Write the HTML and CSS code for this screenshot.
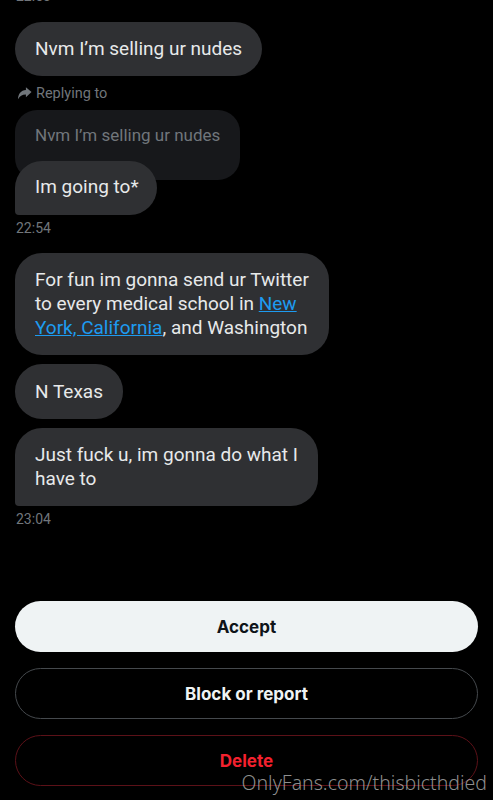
FILE: index.html
```html
<!DOCTYPE html>
<html>
<head>
<meta charset="utf-8">
<link rel="stylesheet" href="styles.css">
</head>
<body>
<div class="page">
  <div class="messages">
    <div class="time time-top">22:53</div>
    <div class="bubble b1">Nvm I’m selling ur nudes</div>
    <div class="replying">
      <svg class="reply-icon" viewBox="0 0 16 16" width="15" height="15"><path d="M15.5 6.5 L9.5 1.2 V4.2 C4.2 4.6 1.2 8.4 1 14.2 C2.8 10.6 5.4 9.2 9.5 9 V12 Z" fill="#71767b"/></svg>
      <span>Replying to</span>
    </div>
    <div class="quote">Nvm I’m selling ur nudes</div>
    <div class="bubble b2 last">Im going to*</div>
    <div class="time t2">22:54</div>
    <div class="bubble b3">For fun im gonna send ur Twitter<br>to every medical school in <a class="link">New<br>York, California</a>, and Washington</div>
    <div class="bubble b4">N Texas</div>
    <div class="bubble b5 last">Just fuck u, im gonna do what I<br>have to</div>
    <div class="time t3">23:04</div>
  </div>
  <div class="actions">
    <div class="btn accept">Accept</div>
    <div class="btn block">Block or report</div>
    <div class="btn delete">Delete</div>
  </div>
  <div class="watermark">OnlyFans.com/thisbicthdied</div>
</div>
</body>
</html>
```
FILE: styles.css
```css
html, body {
  margin: 0;
  padding: 0;
  background: #000;
}
body {
  font-family: Roboto, "Noto Sans", sans-serif;
  color: #e7e9ea;
}
.page {
  position: relative;
  height: 800px;
  overflow: hidden;
  display: flex;
  flex-direction: column;
}
.messages {
  display: flex;
  flex-direction: column;
  align-items: flex-start;
  padding: 0 15px;
}
.time {
  font-size: 14px;
  line-height: 18px;
  color: #71767b;
  padding-left: 1px;
}
.time-top {
  margin-top: -13px;
}
.bubble {
  background: #2f3033;
  border-radius: 27px;
  padding: 15px 20px;
  font-size: 19px;
  line-height: 24px;
  color: #e7e9ea;
}
.bubble.last {
  border-bottom-left-radius: 4px;
}
.b1 {
  margin-top: 17px;
}
.replying {
  display: flex;
  align-items: center;
  gap: 4px;
  margin-top: 8px;
  height: 18px;
  font-size: 14.5px;
  color: #71767b;
  padding-left: 2px;
}
.reply-icon {
  display: block;
}
.quote {
  margin-top: 8px;
  background: #17181b;
  border-radius: 22px;
  padding: 13px 20px 33px 20px;
  font-size: 17px;
  line-height: 24px;
  color: #71767b;
}
.b2 {
  margin-top: -19px;
  padding-top: 14px;
  padding-bottom: 16px;
  padding-right: 18px;
}
.t2 {
  margin-top: 4px;
}
.b3 {
  margin-top: 16px;
}
.link {
  color: #1d9bf0;
  text-decoration: underline;
}
.b4 {
  margin-top: 9px;
  padding-top: 15.5px;
  padding-bottom: 15.5px;
}
.b5 {
  margin-top: 9px;
}
.t3 {
  margin-top: 4px;
}
.actions {
  margin-top: auto;
  padding: 0 15px 14px 15px;
  display: flex;
  flex-direction: column;
  gap: 16px;
}
.btn {
  height: 51px;
  box-sizing: border-box;
  border-radius: 26px;
  display: flex;
  align-items: center;
  justify-content: center;
  font-family: Inter, Roboto, sans-serif;
  font-weight: 700;
  font-size: 17px;
}
.accept {
  background: #eff3f4;
  color: #0f1419;
}
.block {
  border: 1px solid #45494d;
  color: #eff3f4;
}
.delete {
  border: 1px solid #5c1118;
  color: #f4212e;
}
.watermark {
  position: absolute;
  right: 6px;
  bottom: 4px;
  font-family: "Noto Sans", "Open Sans", sans-serif;
  font-size: 19.5px;
  font-weight: 300;
  color: rgba(190, 190, 190, 0.75);
}
```
